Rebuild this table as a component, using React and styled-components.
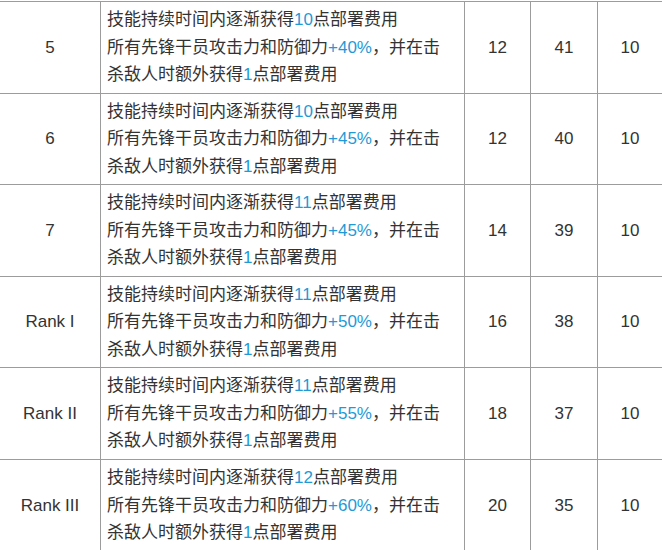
import React from "react";
import styled, { createGlobalStyle } from "styled-components";

const Global = createGlobalStyle`
  html, body {
    margin: 0;
    padding: 0;
    background: #fff;
  }
  body {
    font-family: "Liberation Sans", "Noto Sans CJK SC", sans-serif;
    color: #333;
    overflow: hidden;
  }
`;

const Table = styled.table`
  border-collapse: collapse;
  table-layout: fixed;
  margin: 1px 0 0 -1px;
  width: 663px;
  font-size: 17px;
`;

const Row = styled.tr`
  height: 91.6px;
`;

const Cell = styled.td`
  border: 1px solid #9c9c9c;
  padding: 0 6px;
  text-align: ${(p) => (p.left ? "left" : "center")};
  vertical-align: middle;
  line-height: 27.5px;
  color: #333;
`;

const Line = styled.div`
  white-space: nowrap;
`;

const Hi = styled.span`
  color: #1f9ad6;
`;

const rows = [
  { lv: "5", sp: "10", atk: "+40%", cost: 12, cd: 41, dur: 10 },
  { lv: "6", sp: "10", atk: "+45%", cost: 12, cd: 40, dur: 10 },
  { lv: "7", sp: "11", atk: "+45%", cost: 14, cd: 39, dur: 10 },
  { lv: "Rank I", sp: "11", atk: "+50%", cost: 16, cd: 38, dur: 10 },
  { lv: "Rank II", sp: "11", atk: "+55%", cost: 18, cd: 37, dur: 10 },
  { lv: "Rank III", sp: "12", atk: "+60%", cost: 20, cd: 35, dur: 10 },
];

export default function App() {
  return (
    <>
      <Global />
      <Table>
        <colgroup>
          <col style={{ width: 101 }} />
          <col style={{ width: 364 }} />
          <col style={{ width: 66 }} />
          <col style={{ width: 67 }} />
          <col style={{ width: 65 }} />
        </colgroup>
        <tbody>
          {rows.map((r) => (
            <Row key={r.lv}>
              <Cell>{r.lv}</Cell>
              <Cell left>
                <Line>
                  技能持续时间内逐渐获得<Hi>{r.sp}</Hi>点部署费用
                </Line>
                <Line>
                  所有先锋干员攻击力和防御力<Hi>{r.atk}</Hi>，并在击
                </Line>
                <Line>
                  杀敌人时额外获得<Hi>1</Hi>点部署费用
                </Line>
              </Cell>
              <Cell>{r.cost}</Cell>
              <Cell>{r.cd}</Cell>
              <Cell>{r.dur}</Cell>
            </Row>
          ))}
        </tbody>
      </Table>
    </>
  );
}
